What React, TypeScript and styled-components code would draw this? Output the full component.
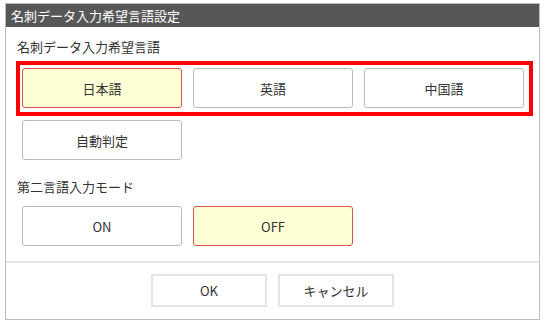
import React, { useState } from "react";
import styled, { createGlobalStyle } from "styled-components";

const GlobalStyle = createGlobalStyle`
  body {
    margin: 0;
    background: #fff;
    font-family: "Noto Sans CJK JP", "Noto Sans", sans-serif;
    color: #333;
  }
`;

const Dialog = styled.div`
  margin: 3px 0 0 5px;
  width: 535px;
  border: 1px solid #bdbdbd;
  box-sizing: border-box;
  background: #fff;
`;

const TitleBar = styled.div`
  height: 23px;
  line-height: 23px;
  padding-left: 5px;
  background: #575757;
  color: #fff;
  font-size: 13px;
`;

const Body = styled.div`
  padding: 10px 10px 15px 10px;
`;

const SectionLabel = styled.div<{ $top?: number }>`
  height: 20px;
  line-height: 20px;
  font-size: 13px;
  padding-left: 1px;
  margin-top: ${(p) => p.$top ?? 0}px;
`;

const Highlight = styled.div`
  margin-top: 4px;
  width: 517px;
  box-sizing: border-box;
  border: 4px solid #ff0000;
  padding: 3px 4px 4px 2px;
`;

const Row = styled.div<{ $top?: number; $inset?: boolean }>`
  display: flex;
  gap: 11px;
  margin-top: ${(p) => p.$top ?? 0}px;
  padding-left: ${(p) => (p.$inset ? 6 : 0)}px;
`;

const Choice = styled.button<{ $active?: boolean }>`
  width: 160px;
  height: 40px;
  box-sizing: border-box;
  border: 1px solid ${(p) => (p.$active ? "#d9534f" : "#bbb")};
  border-radius: 3px;
  background: ${(p) => (p.$active ? "#ffffd6" : "#fff")};
  color: #333;
  font-family: "Noto Sans CJK JP", "Noto Sans", sans-serif;
  font-size: 13px;
  padding: 0;
  cursor: pointer;
`;

const Footer = styled.div`
  border-top: 2px solid #e6e6e6;
  padding: 11px 0 12px;
  display: flex;
  justify-content: center;
  gap: 11px;
`;

const FooterButton = styled.button`
  width: 116px;
  height: 33px;
  box-sizing: border-box;
  border: 2px solid #e4e4e4;
  background: #fff;
  color: #333;
  font-family: "Noto Sans CJK JP", "Noto Sans", sans-serif;
  font-size: 13px;
  padding: 0;
  cursor: pointer;
`;

const languages = ["日本語", "英語", "中国語"];

export default function App() {
  const [lang, setLang] = useState("日本語");
  const [second, setSecond] = useState("OFF");

  return (
    <>
      <GlobalStyle />
      <Dialog>
        <TitleBar>名刺データ入力希望言語設定</TitleBar>
        <Body>
          <SectionLabel>名刺データ入力希望言語</SectionLabel>
          <Highlight>
            <Row>
              {languages.map((l) => (
                <Choice key={l} $active={lang === l} onClick={() => setLang(l)}>
                  {l}
                </Choice>
              ))}
            </Row>
          </Highlight>
          <Row $top={4} $inset>
            <Choice $active={lang === "自動判定"} onClick={() => setLang("自動判定")}>
              自動判定
            </Choice>
          </Row>
          <SectionLabel $top={17}>第二言語入力モード</SectionLabel>
          <Row $top={9} $inset>
            {["ON", "OFF"].map((v) => (
              <Choice key={v} $active={second === v} onClick={() => setSecond(v)}>
                {v}
              </Choice>
            ))}
          </Row>
        </Body>
        <Footer>
          <FooterButton>OK</FooterButton>
          <FooterButton>キャンセル</FooterButton>
        </Footer>
      </Dialog>
    </>
  );
}
